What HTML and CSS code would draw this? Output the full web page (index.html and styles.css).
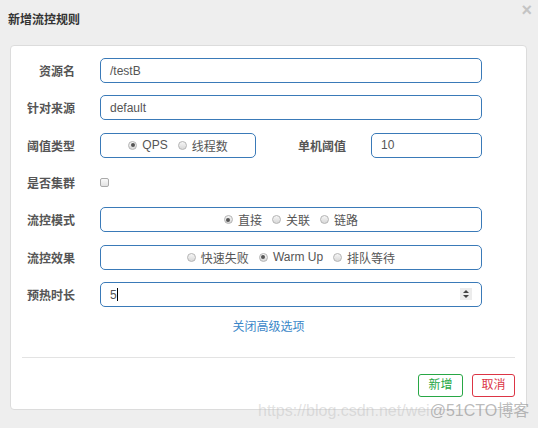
FILE: index.html
```html
<!DOCTYPE html>
<html lang="zh-CN">
<head>
<meta charset="utf-8">
<title>新增流控规则</title>
<link rel="stylesheet" href="styles.css">
</head>
<body>
<div class="dialog">
  <div class="header">
    <span class="title">新增流控规则</span>
    <span class="close">×</span>
  </div>
  <div class="card">
    <div class="row">
      <label class="label">资源名</label>
      <div class="input wide">/testB</div>
    </div>
    <div class="row">
      <label class="label">针对来源</label>
      <div class="input wide">default</div>
    </div>
    <div class="row">
      <label class="label">阈值类型</label>
      <div class="input radios small">
        <span class="radio on"></span><span class="rtext">QPS</span>
        <span class="radio"></span><span class="rtext">线程数</span>
      </div>
      <label class="label2">单机阈值</label>
      <div class="input num">10</div>
    </div>
    <div class="row">
      <label class="label">是否集群</label>
      <span class="checkbox"></span>
    </div>
    <div class="row">
      <label class="label">流控模式</label>
      <div class="input wide radios">
        <span class="radio on"></span><span class="rtext">直接</span>
        <span class="radio"></span><span class="rtext">关联</span>
        <span class="radio"></span><span class="rtext">链路</span>
      </div>
    </div>
    <div class="row">
      <label class="label">流控效果</label>
      <div class="input wide radios">
        <span class="radio"></span><span class="rtext">快速失败</span>
        <span class="radio on"></span><span class="rtext">Warm Up</span>
        <span class="radio"></span><span class="rtext">排队等待</span>
      </div>
    </div>
    <div class="row">
      <label class="label">预热时长</label>
      <div class="input wide numinput"><span class="val">5</span><span class="caret"></span><span class="spin"><i class="up"></i><i class="down"></i></span></div>
    </div>
    <div class="linkrow"><a class="link">关闭高级选项</a></div>
    <div class="divider"></div>
    <div class="buttons">
      <button class="btn ok">新增</button>
      <button class="btn cancel">取消</button>
    </div>
  </div>
  <div class="watermark"><span class="wm1">https://blog.csdn.net/wei</span><span class="wm2">@51CTO博客</span></div>
</div>
</body>
</html>
```
FILE: styles.css
```css
html, body {
  margin: 0;
  padding: 0;
  background: #eeeeee;
}
body {
  font-family: "Liberation Sans", "Noto Sans CJK SC", sans-serif;
  font-size: 12px;
  color: #555;
  width: 538px;
  height: 428px;
  overflow: hidden;
}
.dialog {
  position: relative;
  height: 428px;
}
.header {
  position: relative;
  height: 45px;
  box-sizing: border-box;
  padding: 13px 0 0 8px;
}
.title {
  font-size: 12px;
  font-weight: bold;
  color: #333;
  line-height: 15px;
}
.close {
  position: absolute;
  top: 0px;
  right: 6px;
  font-size: 18px;
  font-weight: bold;
  color: #c4c4c4;
  line-height: 20px;
}
.card {
  margin: 0 11px 0 10px;
  background: #fff;
  border: 1px solid #dcdcdc;
  border-radius: 4px;
  padding: 12px 11px 12px 11px;
  height: 339px;
  box-sizing: border-box;
  height: 365px;
}
.row {
  display: flex;
  align-items: center;
  height: 25px;
  margin-bottom: 12.35px;
}
.label {
  width: 53px;
  text-align: right;
  margin-right: 25px;
  font-weight: bold;
  color: #555;
  flex: none;
}
.label2 {
  width: 90px;
  text-align: right;
  margin-right: 25px;
  font-weight: bold;
  color: #555;
  flex: none;
}
.input {
  box-sizing: border-box;
  height: 25px;
  border: 1px solid #3a7ab8;
  border-radius: 5px;
  padding: 0 9px;
  display: flex;
  align-items: center;
  color: #555;
  font-size: 12px;
  flex: none;
}
.wide {
  width: 382px;
}
.small {
  width: 156px;
}
.num {
  width: 111px;
}
.radios {
  justify-content: center;
}
.radio {
  box-sizing: border-box;
  width: 9px;
  height: 9px;
  border-radius: 50%;
  border: 1px solid #b4b4b4;
  background: linear-gradient(#f6f6f6, #d8d8d8);
  margin-right: 5px;
  position: relative;
  flex: none;
}
.radio.on::after {
  content: "";
  position: absolute;
  left: 1.5px;
  top: 1.5px;
  width: 4px;
  height: 4px;
  border-radius: 50%;
  background: #555;
}
.rtext {
  margin-right: 10px;
  color: #555;
}
.rtext:last-child {
  margin-right: 0;
}
.checkbox {
  box-sizing: border-box;
  width: 9px;
  height: 9px;
  border: 1px solid #aaa;
  border-radius: 2px;
  background: linear-gradient(#fafafa, #e2e2e2);
  margin-left: 0;
}
.numinput {
  position: relative;
}
.caret {
  display: inline-block;
  width: 1px;
  height: 13px;
  background: #000;
  margin-left: 0px;
}
.spin {
  position: absolute;
  right: 9px;
  top: 5px;
  width: 12px;
  height: 12px;
  background: #ececec;
  display: flex;
  flex-direction: column;
  align-items: center;
  justify-content: center;
  gap: 2px;
}
.spin i {
  display: block;
  width: 0;
  height: 0;
  border-left: 3px solid transparent;
  border-right: 3px solid transparent;
}
.spin .up {
  border-bottom: 3px solid #444;
}
.spin .down {
  border-top: 3px solid #444;
}
.linkrow {
  text-align: center;
  line-height: 17px;
  margin-top: -0.35px;
}
.link {
  color: #3a87c8;
  font-size: 12px;
}
.divider {
  height: 1px;
  background: #e3e3e3;
  margin-top: 21px;
}
.buttons {
  display: flex;
  justify-content: flex-end;
  gap: 9px;
  margin-top: 16px;
}
.btn {
  font-family: "Liberation Sans", "Noto Sans CJK SC", sans-serif;
  font-size: 12px;
  height: 23px;
  background: #fff;
  border-radius: 3px;
  padding: 0 8px;
  box-sizing: border-box;
  line-height: 21px;
}
.btn.ok {
  width: 45px;
  border: 1px solid #28a745;
  color: #28a745;
}
.btn.cancel {
  width: 43px;
  border: 1px solid #dc3545;
  color: #dc3545;
}
.watermark {
  position: absolute;
  left: 258px;
  top: 402px;
  font-size: 16px;
  line-height: 18px;
  white-space: nowrap;
}
.wm1 {
  color: rgba(190, 190, 190, 0.45);
}
.wm2 {
  color: rgba(130, 130, 130, 0.55);
}
```
